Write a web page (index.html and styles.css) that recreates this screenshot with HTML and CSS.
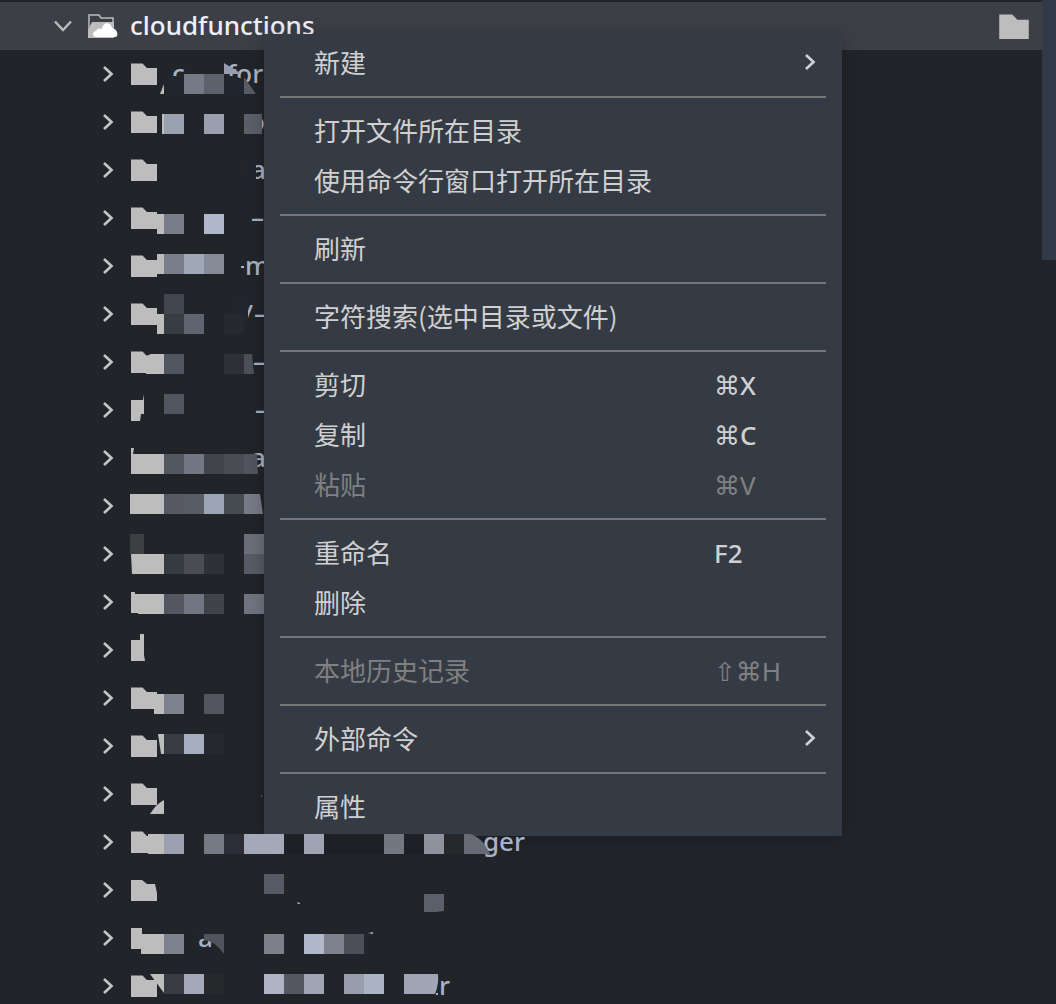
FILE: index.html
```
<!DOCTYPE html>
<html lang="zh-CN">

<head>
    <meta charset="UTF-8">
    <meta name="viewport" content="width=device-width, initial-scale=1.0">
    <title>cloudfunctions</title>
    <link rel="stylesheet" href="styles.css">
</head>

<body>
    <svg width="0" height="0" class="symbols" aria-hidden="true">
        <symbol id="folder" viewBox="0 0 26 22">
            <path d="M0 0.5H11.5L16 5H26V22H0Z" />
        </symbol>
        <symbol id="chevron" viewBox="0 0 12 18">
            <path d="M2 2L9.500 9L2 16" fill="none" stroke="currentColor" stroke-width="2.700" />
        </symbol>
    </svg>

    <main class="explorer">
        <div class="root">
            <svg class="root-arrow" viewBox="0 0 18 12">
                <path d="M1 1.500L9 10L17 1.500" fill="none" stroke="currentColor" stroke-width="2.400" />
            </svg>
            <svg class="root-icon" viewBox="0 0 32 26">
                <path d="M2 24V2H12L14 5H26V9" fill="none" stroke="#bdbdbd" stroke-width="1.500" />
                <path d="M1 25V17L5 9H27V25Z" fill="#bdbdbd" />
                <path d="M9 24C5 24 5 18 9 18C10 15 13 15 15 16C16 8 24 9 25 15C31 16 32 24 28 24Z" fill="#fff" />
            </svg>
            <span class="root-name">cloudfunctions</span>
            <svg class="root-folder"><use href="#folder" /></svg>
        </div>

        <!-- Each label drawing uses tree coordinates: row n starts at y = 50 + 48n -->
        <ul class="tree">
            <li><svg class="arrow"><use href="#chevron" /></svg>
                <svg class="label" viewBox="130 50 400 48">
                    <use href="#folder" x="131" y="63" width="26" height="22" />
                    <text x="172" y="83">c</text><text x="227" y="83">for</text>
                    <path d="M166 76H234L246 80L256 94H166Z" fill="#21252d" />
                    <path d="M160 94L164 84V94Z" />
                    <path d="M184 74h20v20h-20z" fill="#757a87" />
                    <path d="M204 74h20v20h-20z" fill="#5d616c" />
                    <path d="M224 63L242 74H224Z" fill="#979dae" />
                    <path d="M244 77L256 94H244Z" fill="#585c66" />
                </svg></li>
            <li><svg class="arrow"><use href="#chevron" /></svg>
                <svg class="label" viewBox="130 98 400 48">
                    <use href="#folder" x="131" y="111" width="26" height="22" />
                    <text x="249" y="131">o</text>
                    <path d="M162 114h3v20h-3z" />
                    <path d="M164 114h20v20h-20z" fill="#9aa1b1" />
                    <path d="M204 114h20v20h-20z" fill="#9a9fae" />
                    <path d="M244 114h18v20h-18z" fill="#5a5f69" />
                </svg></li>
            <li><svg class="arrow"><use href="#chevron" /></svg>
                <svg class="label" viewBox="130 146 400 48">
                    <use href="#folder" x="131" y="159" width="26" height="22" />
                    <text x="251" y="179">a</text>
                    <path d="M244 160h12v22h-12z" fill="#21252d" />
                </svg></li>
            <li><svg class="arrow"><use href="#chevron" /></svg>
                <svg class="label" viewBox="130 194 400 48">
                    <use href="#folder" x="131" y="207" width="26" height="22" />
                    <text x="251" y="227">–</text>
                    <path d="M157 214h7v20h-7z" />
                    <path d="M164 214h20v20h-20z" fill="#777c88" />
                    <path d="M204 214h20v20h-20z" fill="#b0b8ca" />
                </svg></li>
            <li><svg class="arrow"><use href="#chevron" /></svg>
                <svg class="label" viewBox="130 242 400 48">
                    <use href="#folder" x="131" y="255" width="26" height="22" />
                    <text x="245" y="275">m</text>
                    <path d="M241 266h3v2h-3z" fill="#a9b2c3" />
                    <path d="M157 254h7v20h-7z" />
                    <path d="M164 254h20v20h-20z" fill="#797f8b" />
                    <path d="M184 254h20v20h-20z" fill="#a0a8b8" />
                    <path d="M204 254h20v20h-20z" fill="#868b98" />
                </svg></li>
            <li><svg class="arrow"><use href="#chevron" /></svg>
                <svg class="label" viewBox="130 290 400 48">
                    <use href="#folder" x="131" y="303" width="26" height="22" />
                    <text x="243" y="323">/</text><text x="254" y="323">–</text>
                    <path d="M236 298h12v28h-12z" fill="#21252d" />
                    <path d="M157 314h7v20h-7z" />
                    <path d="M164 294h20v20h-20z" fill="#41464e" />
                    <path d="M164 314h20v20h-20z" fill="#383c43" />
                    <path d="M184 314h20v20h-20z" fill="#5f6570" />
                    <path d="M224 314h20v20h-20z" fill="#262a30" />
                </svg></li>
            <li><svg class="arrow"><use href="#chevron" /></svg>
                <svg class="label" viewBox="130 338 400 48">
                    <use href="#folder" x="131" y="351" width="26" height="22" />
                    <text x="253" y="371">–</text>
                    <path d="M146 356L151 354H164V374H146Z" />
                    <path d="M164 354h20v20h-20z" fill="#50565f" />
                    <path d="M224 354h20v20h-20z" fill="#2d3037" />
                    <path d="M244 354h8l2 20h-10z" fill="#4d5059" />
                </svg></li>
            <li><svg class="arrow"><use href="#chevron" /></svg>
                <svg class="label" viewBox="130 386 400 48">
                    <text x="255" y="419">–</text>
                    <path d="M131 400H143L144 394V414H141L140 421H131Z" />
                    <path d="M164 394h20v20h-20z" fill="#50565f" />
                </svg></li>
            <li><svg class="arrow"><use href="#chevron" /></svg>
                <svg class="label" viewBox="130 434 400 48">
                    <text x="251" y="467">a</text>
                    <path d="M131 448H134L133 454H164V474H131Z" />
                    <path d="M164 454h20v20h-20z" fill="#525962" />
                    <path d="M184 454h20v20h-20z" fill="#727883" />
                    <path d="M204 454h20v20h-20z" fill="#41444b" />
                    <path d="M224 454h20v20h-20z" fill="#4a4c54" />
                    <path d="M244 454h13l1 20h-14z" fill="#53555e" />
                </svg></li>
            <li><svg class="arrow"><use href="#chevron" /></svg>
                <svg class="label" viewBox="130 482 400 48">
                    <path d="M130 494h34v20h-34z" />
                    <path d="M164 494h20v20h-20z" fill="#565863" />
                    <path d="M184 494h20v20h-20z" fill="#575c65" />
                    <path d="M204 494h20v20h-20z" fill="#9ba5b5" />
                    <path d="M224 494h20v20h-20z" fill="#474c53" />
                    <path d="M244 494h16l3 20h-19z" fill="#777b88" />
                </svg></li>
            <li><svg class="arrow"><use href="#chevron" /></svg>
                <svg class="label" viewBox="130 530 400 48">
                    <path d="M130 534h14v20h-14z" fill="#3d3f43" />
                    <path d="M131 554H164V574H132Z" />
                    <path d="M164 554h20v20h-20z" fill="#363b42" />
                    <path d="M184 554h20v20h-20z" fill="#4a4c54" />
                    <path d="M204 554h20v20h-20z" fill="#2e3138" />
                    <path d="M244 534h20v20h-20z" fill="#6a6f79" />
                    <path d="M244 554h20v20h-20z" fill="#575b65" />
                </svg></li>
            <li><svg class="arrow"><use href="#chevron" /></svg>
                <svg class="label" viewBox="130 578 400 48">
                    <path d="M131 592H135V594H164V614H138V613H131Z" />
                    <path d="M164 594h20v20h-20z" fill="#545662" />
                    <path d="M184 594h20v20h-20z" fill="#707682" />
                    <path d="M204 594h20v20h-20z" fill="#40434a" />
                    <path d="M244 594h20v20h-20z" fill="#707581" />
                </svg></li>
            <li><svg class="arrow"><use href="#chevron" /></svg>
                <svg class="label" viewBox="130 626 400 48">
                    <path d="M131 640H140V634H144V655L145 661H131Z" />
                </svg></li>
            <li><svg class="arrow"><use href="#chevron" /></svg>
                <svg class="label" viewBox="130 674 400 48">
                    <use href="#folder" x="131" y="687" width="26" height="22" />
                    <path d="M147 692H152V694H164V714H154V708H147Z" />
                    <path d="M164 694h20v20h-20z" fill="#7c818d" />
                    <path d="M204 694h20v20h-20z" fill="#54565f" />
                </svg></li>
            <li><svg class="arrow"><use href="#chevron" /></svg>
                <svg class="label" viewBox="130 722 400 48">
                    <use href="#folder" x="131" y="735" width="26" height="22" />
                    <path d="M158 734H164V754H161Z" />
                    <path d="M164 734h20v20h-20z" fill="#383b42" />
                    <path d="M184 734h20v20h-20z" fill="#a6aebf" />
                    <path d="M204 734h20v20h-20z" fill="#26292f" />
                </svg></li>
            <li><svg class="arrow"><use href="#chevron" /></svg>
                <svg class="label" viewBox="130 770 400 48">
                    <use href="#folder" x="131" y="783" width="26" height="22" />
                    <path d="M150 814Q156 804 164 800V814Z" />
                    <path d="M261 795h1v2h-1z" fill="#5a5f69" />
                </svg></li>
            <li class="over-menu"><svg class="arrow"><use href="#chevron" /></svg>
                <svg class="label" viewBox="130 818 400 48">
                    <use href="#folder" x="131" y="831" width="26" height="22" />
                    <text x="483" y="851">ger</text>
                    <path d="M482 830h42v6h-42z" fill="#353b45" />
                    <path d="M148 834h16v20h-16z" />
                    <path d="M164 834h20v20h-20z" fill="#9aa0b0" />
                    <path d="M204 834h20v20h-20z" fill="#757984" />
                    <path d="M224 834h20v20h-20z" fill="#2c2d36" />
                    <path d="M244 834h40v20h-40z" fill="#a3a9b8" />
                    <path d="M284 834h180v20h-180z" fill="#1d2024" />
                    <path d="M304 834h20v20h-20z" fill="#9fa4b4" />
                    <path d="M384 834h20v20h-20z" fill="#737780" />
                    <path d="M424 834h20v20h-20z" fill="#8e929d" />
                    <path d="M444 834h20v20h-20z" fill="#26282c" />
                    <path d="M464 834H470Q482 837 490 854H464Z" fill="#686b75" />
                </svg></li>
            <li><svg class="arrow"><use href="#chevron" /></svg>
                <svg class="label" viewBox="130 866 400 48">
                    <path d="M131 880H142L147 884H155L157 893V901H131Z" />
                    <path d="M264 874h20v20h-20z" fill="#565a64" />
                    <path d="M297 902l3 1v1h-2z" fill="#a9b2c3" />
                    <path d="M424 894h20v17l-8 1h-12z" fill="#5a5f69" />
                </svg></li>
            <li><svg class="arrow"><use href="#chevron" /></svg>
                <svg class="label" viewBox="130 914 400 48">
                    <text x="198" y="947">a</text>
                    <path d="M198 930H214V939H198Z" fill="#21252d" />
                    <path d="M131 928H142V934H164V954H141V949H131Z" />
                    <path d="M164 934h20v20h-20z" fill="#7c828d" />
                    <path d="M204 934H224V954Q215 941 204 940Z" fill="#52535d" />
                    <path d="M264 934h20v20h-20z" fill="#7b808b" />
                    <path d="M304 934h20v20h-20z" fill="#b0b8ca" />
                    <path d="M324 934h20v20h-20z" fill="#7c818d" />
                    <path d="M344 934h20v20h-20z" fill="#4d4f58" />
                    <path d="M368 933l5 -1v2z" fill="#a9b2c3" />
                </svg></li>
            <li><svg class="arrow"><use href="#chevron" /></svg>
                <svg class="label" viewBox="130 962 400 48">
                    <use href="#folder" x="131" y="975" width="26" height="22" />
                    <text x="439" y="995">r</text>
                    <path d="M150 974H164V993Z" />
                    <path d="M164 974h20v20h-20z" fill="#383b42" />
                    <path d="M184 974h20v20h-20z" fill="#a3a9b9" />
                    <path d="M204 974h20v20h-20z" fill="#26282c" />
                    <path d="M264 974h20v20h-20z" fill="#aeb4c4" />
                    <path d="M284 974h20v20h-20z" fill="#555862" />
                    <path d="M304 974h20v20h-20z" fill="#a1a6b6" />
                    <path d="M344 974h20v20h-20z" fill="#999eac" />
                    <path d="M364 974h20v20h-20z" fill="#aab4c4" />
                    <path d="M404 974H438Q439 984 435 994H404Z" fill="#a1a6b6" />
                    <path d="M436 993h2v2h-2z" fill="#a9b2c3" />
                </svg></li>
        </ul>
    </main>

    <div class="scrollbar"></div>

    <div class="menu" role="menu">
        <button class="item"><span>新建</span><svg class="more"><use href="#chevron" /></svg></button>
        <hr>
        <button class="item"><span>打开文件所在目录</span></button>
        <button class="item"><span>使用命令行窗口打开所在目录</span></button>
        <hr>
        <button class="item"><span>刷新</span></button>
        <hr>
        <button class="item"><span>字符搜索(选中目录或文件)</span></button>
        <hr>
        <button class="item"><span>剪切</span><kbd>⌘X</kbd></button>
        <button class="item"><span>复制</span><kbd>⌘C</kbd></button>
        <button class="item" disabled><span>粘贴</span><kbd>⌘V</kbd></button>
        <hr>
        <button class="item"><span>重命名</span><kbd>F2</kbd></button>
        <button class="item"><span>删除</span></button>
        <hr>
        <button class="item" disabled><span>本地历史记录</span><kbd>⇧⌘H</kbd></button>
        <hr>
        <button class="item"><span>外部命令</span><svg class="more"><use href="#chevron" /></svg></button>
        <hr>
        <button class="item"><span>属性</span></button>
    </div>
</body>

</html>
```
FILE: styles.css
```
* {
    box-sizing: border-box;
}

body {
    margin: 0;
    height: 100vh;
    overflow: hidden;
    background: #212429;
    color: #eceff8;
    font-family: "Noto Sans", "Noto Sans CJK SC", sans-serif;
    font-size: 26px;
}

.symbols {
    position: absolute;
}

.explorer {
    padding-top: 2px;
}

.root {
    display: flex;
    align-items: center;
    height: 48px;
    padding: 0 27px 0 54px;
    background: #3d3f47;
}

.root-arrow {
    width: 18px;
    height: 12px;
    margin-right: 15px;
    color: #bdbdbd;
}

.root-icon {
    width: 32px;
    height: 26px;
    margin-right: 11px;
}

.root-name {
    flex: 1;
    padding-bottom: 2px;
    font-weight: 500;
}

.root-folder {
    width: 30px;
    height: 25px;
    fill: #bdbdbd;
}

.tree {
    margin: 0;
    padding: 0;
    list-style: none;
}

.tree li {
    display: flex;
    align-items: center;
    height: 48px;
    padding-left: 102px;
}

.tree .over-menu {
    position: relative;
    z-index: 2;
}

.arrow {
    width: 12px;
    height: 18px;
    margin-right: 16px;
    color: #c4c4c4;
}

.label {
    width: 400px;
    height: 48px;
    fill: #bdbdbd;
}

.label text {
    fill: #a9b2c3;
    font-weight: 500;
}

.scrollbar {
    position: absolute;
    top: 0;
    right: 0;
    width: 14px;
    height: 260px;
    background: #323a48;
}

.menu {
    position: absolute;
    top: 34px;
    left: 264px;
    z-index: 1;
    width: 578px;
    padding: 4px 16px;
    background: #353b45;
    box-shadow: 0 2px 16px rgba(0, 0, 0, 0.25);
}

.menu hr {
    height: 2px;
    margin: 8px 0;
    border: none;
    background: #777;
}

.item {
    display: flex;
    align-items: center;
    width: 100%;
    height: 50px;
    padding: 0 0 0 34px;
    border: none;
    background: none;
    color: #d0d0d0;
    font-family: "Noto Sans CJK SC", sans-serif;
    font-size: 26px;
    text-align: left;
}

.item span {
    flex: 1;
    padding-bottom: 4px;
}

.item:disabled {
    color: #808080;
}

.item kbd {
    width: 112px;
    font-family: "Noto Sans", "DejaVu Sans", sans-serif;
    font-size: 26px;
    font-weight: 500;
}

.item:disabled kbd {
    font-weight: 400;
}

.more {
    width: 12px;
    height: 18px;
    margin: 0 10px 2px 0;
}
```
